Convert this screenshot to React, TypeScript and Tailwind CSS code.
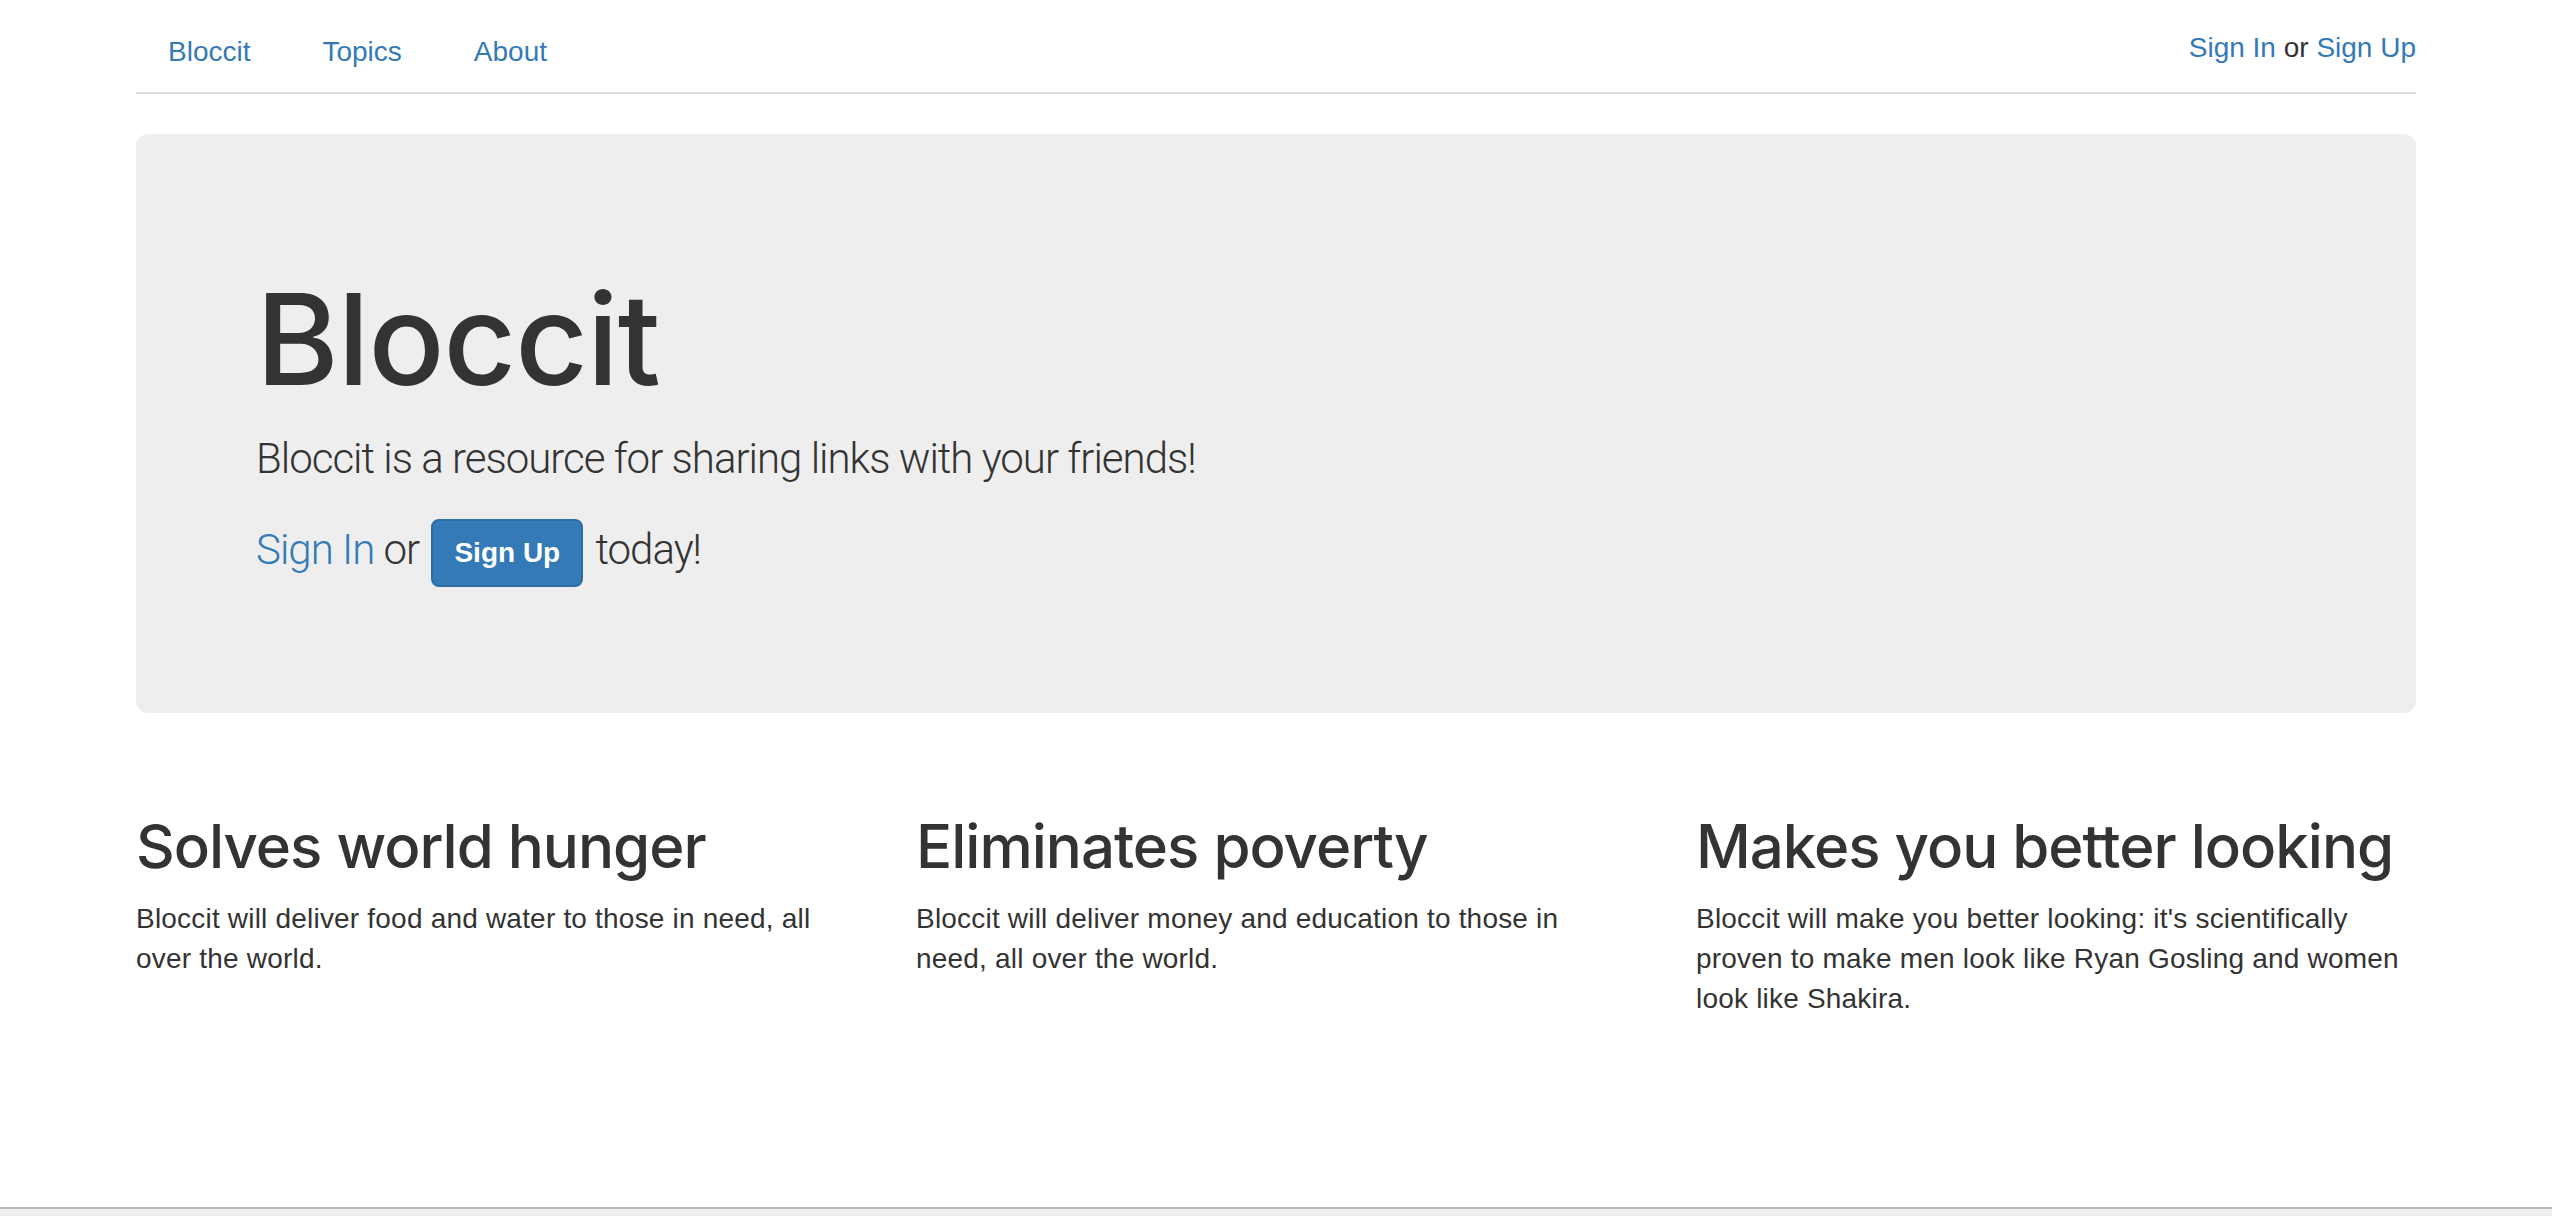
import React from "react";

const NAV_LINKS = ["Bloccit", "Topics", "About"];

const FEATURES = [
  {
    title: "Solves world hunger",
    body: "Bloccit will deliver food and water to those in need, all over the world.",
  },
  {
    title: "Eliminates poverty",
    body: "Bloccit will deliver money and education to those in need, all over the world.",
  },
  {
    title: "Makes you better looking",
    body: "Bloccit will make you better looking: it's scientifically proven to make men look like Ryan Gosling and women look like Shakira.",
  },
];

export default function App() {
  return (
    <div className="flex min-h-screen flex-col bg-white font-['Liberation_Sans',Arial,sans-serif] text-[28px] leading-[40px] text-[#333]">
      <div className="mx-auto w-[2280px] flex-1 pt-[12px]">
        {/* Top nav */}
        <nav className="flex items-start justify-between border-b-2 border-[#ddd]">
          <ul className="flex gap-[8px]">
            {NAV_LINKS.map((link) => (
              <li key={link}>
                <a href="#" className="block px-[32px] py-[20px] text-[#337ab7]">
                  {link}
                </a>
              </li>
            ))}
          </ul>
          <div className="pt-[16px]">
            <a href="#" className="text-[#337ab7]">Sign In</a> or{" "}
            <a href="#" className="text-[#337ab7]">Sign Up</a>
          </div>
        </nav>

        {/* Jumbotron */}
        <div className="mt-[40px] rounded-[12px] bg-[#eee] px-[120px] py-[96px]">
          <h1 className="mt-[40px] mb-[20px] font-['Inter',sans-serif] text-[126px] font-medium leading-[1.1] tracking-[-1px]">
            Bloccit
          </h1>
          <p className="mb-[30px] font-['Roboto',sans-serif] text-[42px] font-light leading-[60px] tracking-[-1px]">
            Bloccit is a resource for sharing links with your friends!
          </p>
          <p className="mb-[30px] font-['Roboto',sans-serif] text-[42px] font-light leading-[60px] tracking-[-1px]">
            <a href="#" className="text-[#337ab7]">Sign In</a> or{" "}
            <button className="mx-[3px] inline-block h-[68px] rounded-[8px] border-2 border-[#2e6da4] bg-[#337ab7] px-[21px] align-middle font-['Liberation_Sans',Arial,sans-serif] text-[28px] font-bold leading-[40px] tracking-normal text-white">
              Sign Up
            </button>{" "}
            today!
          </p>
        </div>

        {/* Feature columns */}
        <div className="mt-[60px] grid grid-cols-3 gap-[60px]">
          {FEATURES.map((f) => (
            <div key={f.title}>
              <h2 className="mt-[40px] mb-[20px] font-['Inter',sans-serif] text-[60px] font-medium leading-[66px] tracking-[-1px]">
                {f.title}
              </h2>
              <p className="max-w-[705px] tracking-[0.2px]">{f.body}</p>
            </div>
          ))}
        </div>
      </div>

      {/* Browser bottom strip */}
      <div className="h-[9px] border-t-2 border-[#b8b8b8] bg-[#f0f0f0]" />
    </div>
  );
}
